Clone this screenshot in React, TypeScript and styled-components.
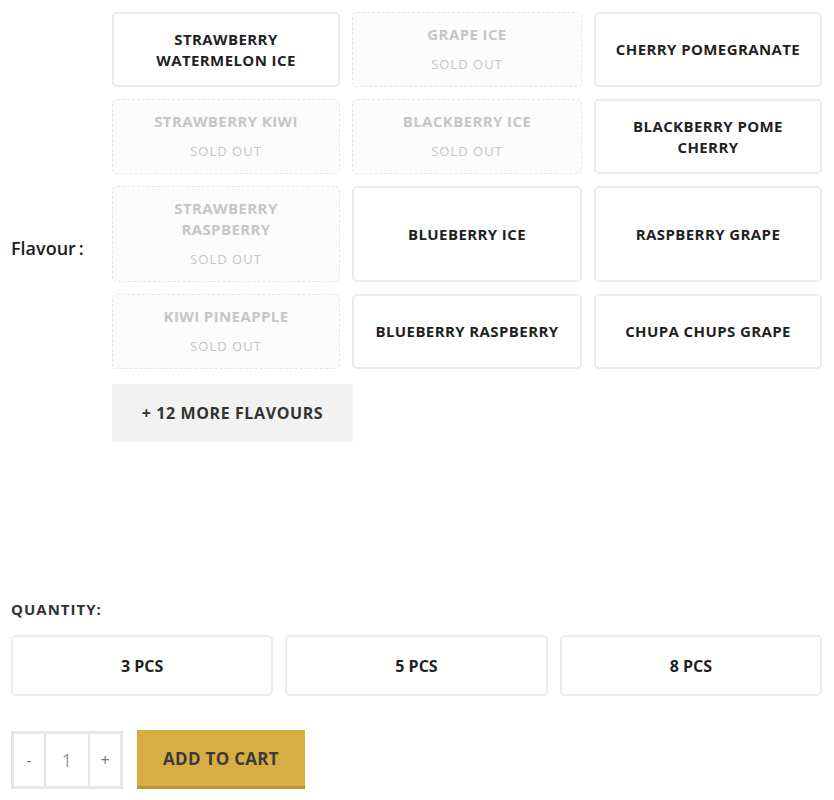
import styled, { createGlobalStyle } from "styled-components";

const Global = createGlobalStyle`
  body {
    margin: 0;
    background: #fff;
    font-family: "Open Sans", "Liberation Sans", sans-serif;
    color: #222;
  }
`;

const Page = styled.div`
  padding: 12px 12px 0 11px;
`;

const FieldRow = styled.div`
  display: grid;
  grid-template-columns: 101px 1fr;
  align-items: center;
`;

const FieldLabel = styled.div`
  font-size: 18px;
  font-weight: 600;
  color: #1c1c1c;
`;

const FieldValue = styled.div`
  padding-bottom: 42px;
`;

const SwatchGrid = styled.div`
  display: grid;
  grid-template-columns: 228px 230px 228px;
  gap: 12px;
`;

const Swatch = styled.div<{ $soldOut?: boolean }>`
  display: flex;
  flex-direction: column;
  align-items: center;
  justify-content: center;
  text-align: center;
  padding: 11px 8px;
  border-radius: 5px;
  border: ${({ $soldOut }) => ($soldOut ? "1px dashed #e6e6e6" : "2px solid #ececec")};
  background: ${({ $soldOut }) => ($soldOut ? "#fcfcfc" : "#fff")};
  box-sizing: border-box;
`;

const SwatchName = styled.span<{ $soldOut?: boolean }>`
  white-space: pre;
  font-size: 15px;
  font-weight: 700;
  line-height: 21px;
  letter-spacing: 0.4px;
  color: ${({ $soldOut }) => ($soldOut ? "#c6c6c6" : "#1f1f24")};
`;

const SoldOut = styled.span`
  margin-top: 9px;
  font-size: 13px;
  line-height: 21px;
  letter-spacing: 1px;
  color: #c4c4c4;
`;

const MoreButton = styled.button`
  margin-top: 15px;
  width: 241px;
  height: 58px;
  border: none;
  background: #f2f2f2;
  font-family: inherit;
  font-size: 16px;
  font-weight: 700;
  letter-spacing: 0.6px;
  color: #333;
`;

const QtyHeading = styled.div`
  margin-top: 115px;
  font-size: 15px;
  font-weight: 700;
  letter-spacing: 1px;
  color: #333;
`;

const PackRow = styled.div`
  margin-top: 16px;
  display: grid;
  grid-template-columns: repeat(3, 1fr);
  gap: 12px;
`;

const Pack = styled.div`
  height: 61px;
  display: flex;
  align-items: center;
  justify-content: center;
  border: 2px solid #ececec;
  border-radius: 5px;
  box-sizing: border-box;
  font-size: 16px;
  font-weight: 700;
  color: #1f1f24;
`;

const CartRow = styled.div`
  margin-top: 34px;
  display: flex;
  align-items: center;
  gap: 14px;
`;

const Stepper = styled.div`
  display: grid;
  grid-template-columns: 30px 42px 30px;
  gap: 2px;
  height: 58px;
  border: 3px solid #e6e6e6;
  background: #e6e6e6;
  box-sizing: border-box;
`;

const StepCell = styled.div<{ $value?: boolean }>`
  display: flex;
  align-items: center;
  justify-content: center;
  background: #fff;
  font-size: ${({ $value }) => ($value ? "18px" : "16px")};
  color: ${({ $value }) => ($value ? "#999" : "#777")};
`;

const AddToCart = styled.button`
  width: 168px;
  height: 59px;
  border: none;
  border-bottom: 3px solid #bf9538;
  background: #d7ad44;
  font-family: inherit;
  font-size: 17px;
  font-weight: 700;
  letter-spacing: 0.3px;
  color: #3a3a3a;
`;

type Flavour = { name: string; soldOut?: boolean };

// line breaks follow the storefront's swatch wrapping
const flavours: Flavour[] = [
  { name: "STRAWBERRY\nWATERMELON ICE" },
  { name: "GRAPE ICE", soldOut: true },
  { name: "CHERRY POMEGRANATE" },
  { name: "STRAWBERRY KIWI", soldOut: true },
  { name: "BLACKBERRY ICE", soldOut: true },
  { name: "BLACKBERRY POME\nCHERRY" },
  { name: "STRAWBERRY\nRASPBERRY", soldOut: true },
  { name: "BLUEBERRY ICE" },
  { name: "RASPBERRY GRAPE" },
  { name: "KIWI PINEAPPLE", soldOut: true },
  { name: "BLUEBERRY RASPBERRY" },
  { name: "CHUPA CHUPS GRAPE" },
];

const packs = ["3 PCS", "5 PCS", "8 PCS"];

export default function App() {
  return (
    <Page>
      <Global />
      <FieldRow>
        <FieldLabel>Flavour&thinsp;:</FieldLabel>
        <FieldValue>
          <SwatchGrid>
            {flavours.map((f) => (
              <Swatch key={f.name} $soldOut={f.soldOut}>
                <SwatchName $soldOut={f.soldOut}>{f.name}</SwatchName>
                {f.soldOut && <SoldOut>SOLD OUT</SoldOut>}
              </Swatch>
            ))}
          </SwatchGrid>
          <MoreButton>+ 12 MORE FLAVOURS</MoreButton>
        </FieldValue>
      </FieldRow>

      <QtyHeading>QUANTITY:</QtyHeading>
      <PackRow>
        {packs.map((p) => (
          <Pack key={p}>{p}</Pack>
        ))}
      </PackRow>

      <CartRow>
        <Stepper>
          <StepCell>-</StepCell>
          <StepCell $value>1</StepCell>
          <StepCell>+</StepCell>
        </Stepper>
        <AddToCart>ADD TO CART</AddToCart>
      </CartRow>
    </Page>
  );
}
